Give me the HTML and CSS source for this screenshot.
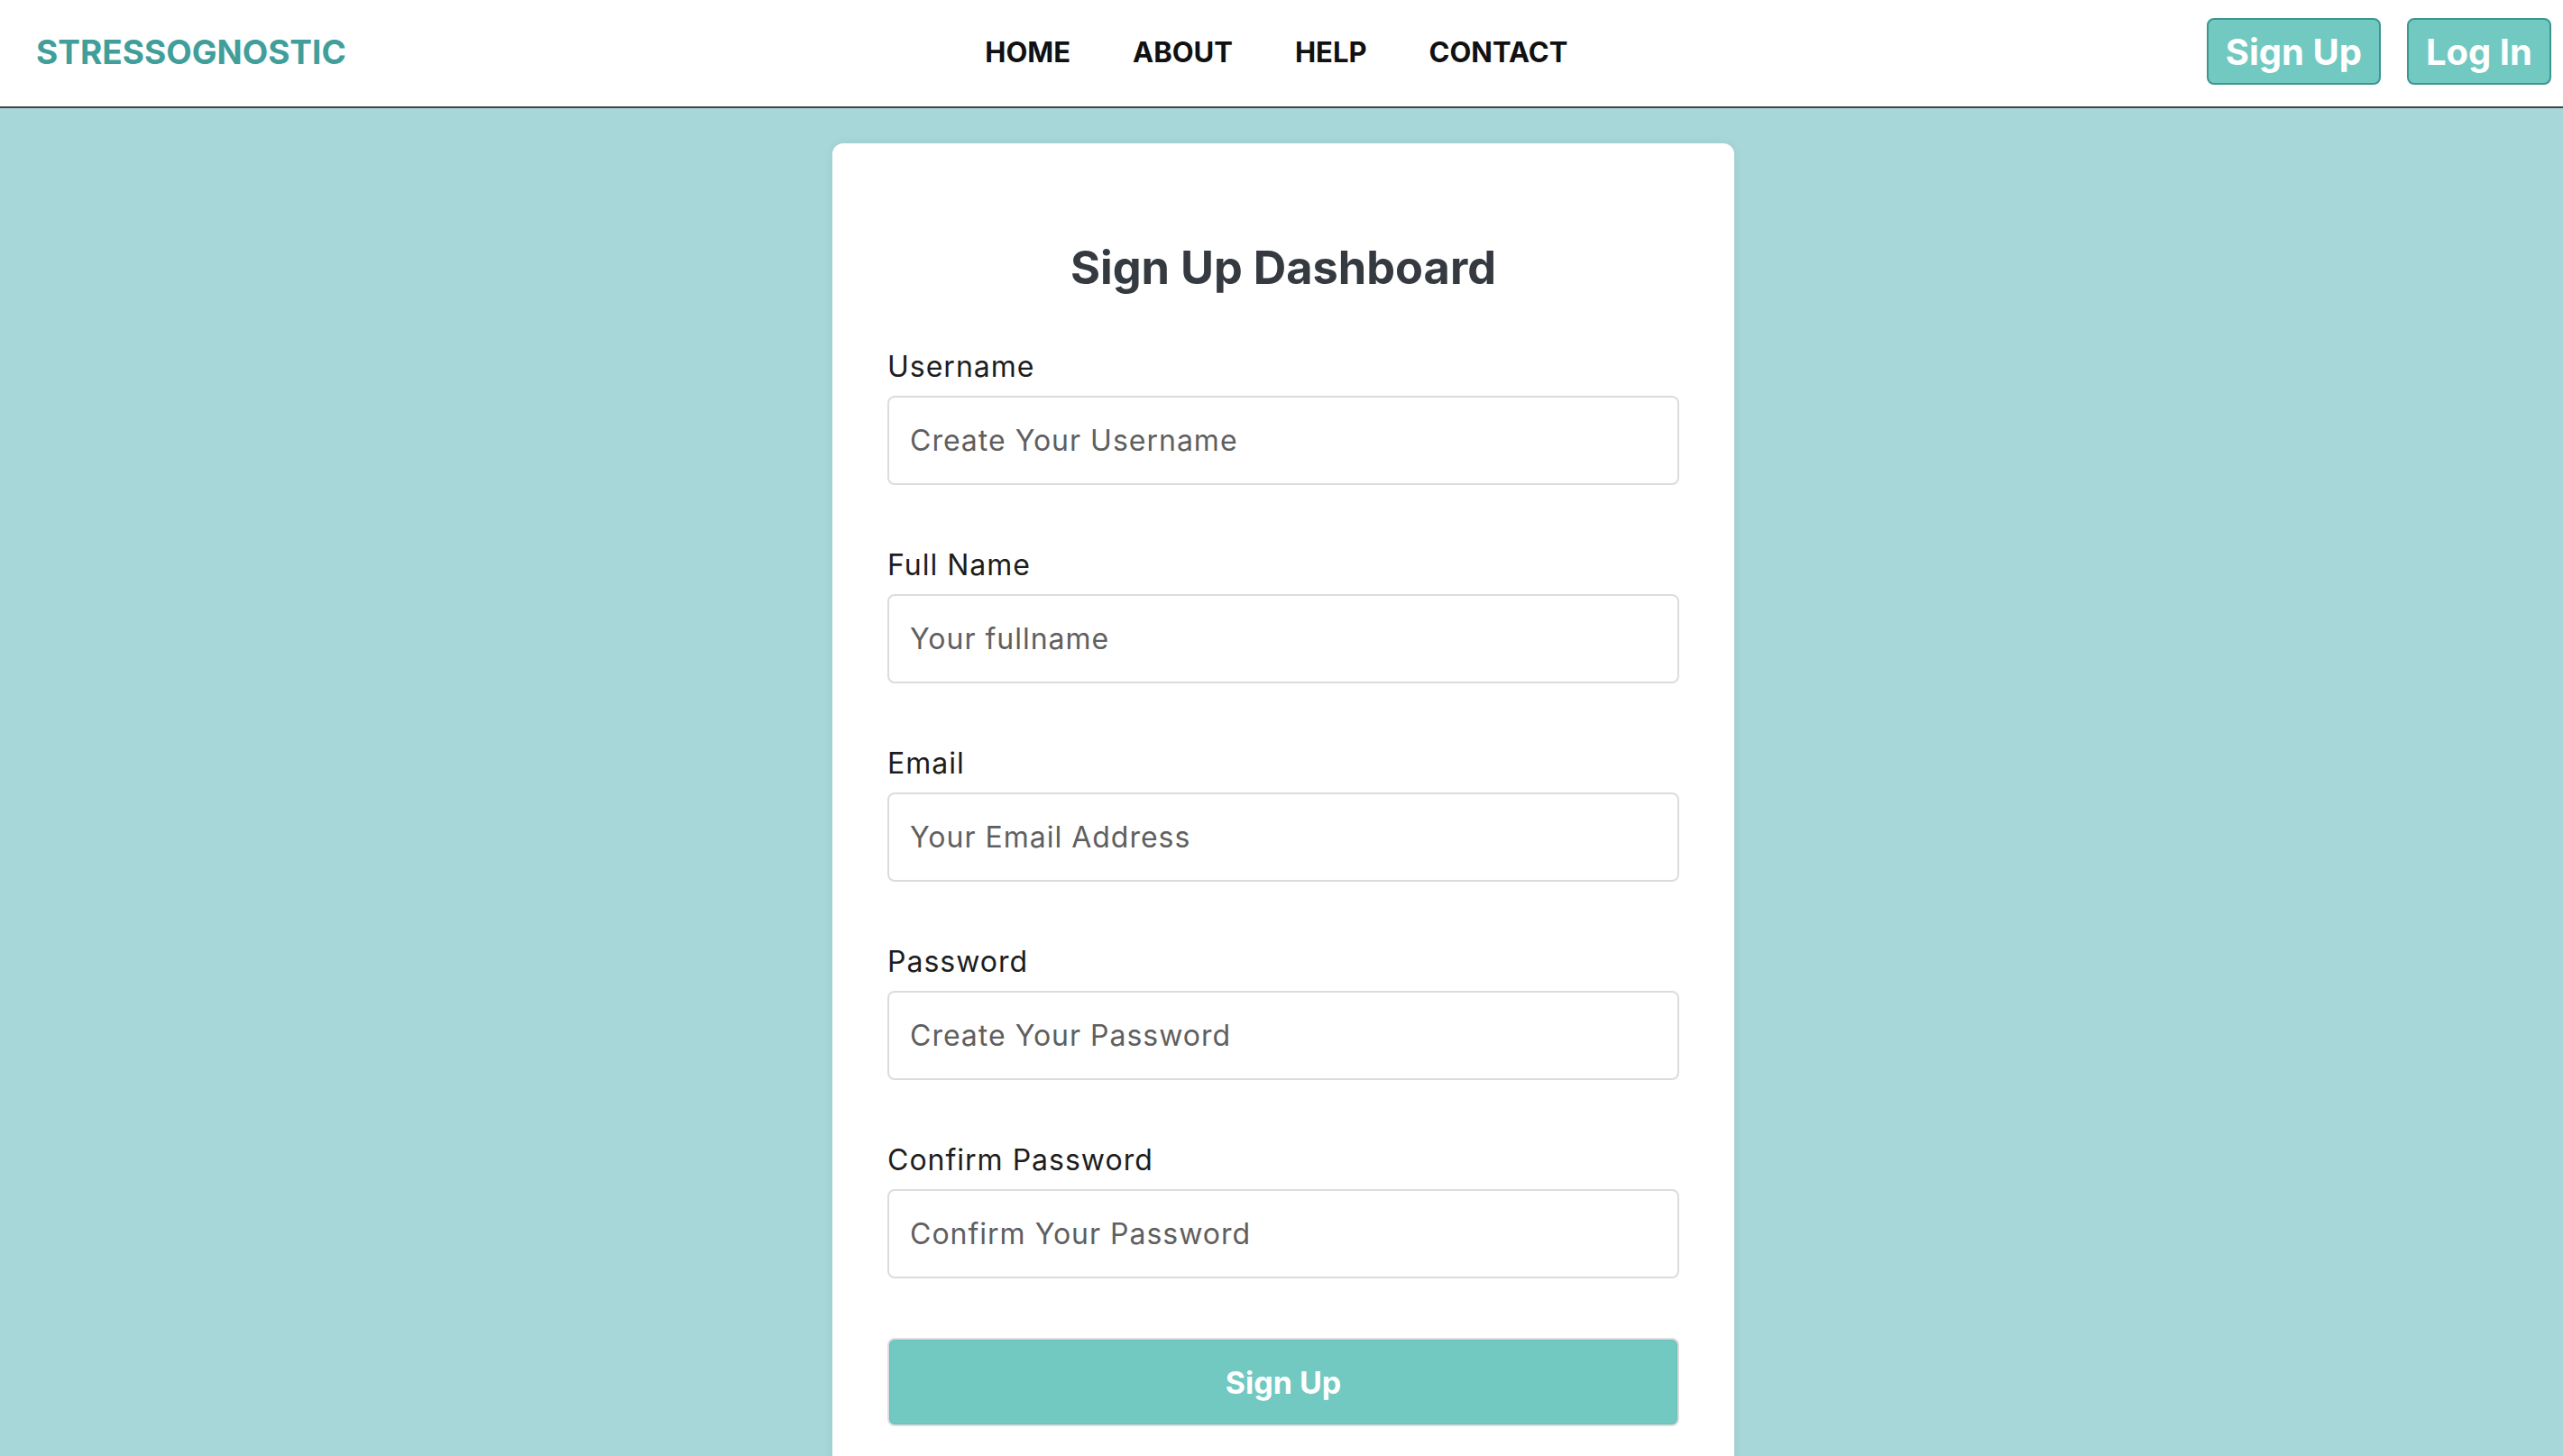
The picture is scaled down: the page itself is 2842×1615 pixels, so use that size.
FILE: index.html
```html
<!DOCTYPE html>
<html lang="en">
<head>
<meta charset="utf-8">
<title>Stressognostic - Sign Up</title>
<link rel="stylesheet" href="styles.css">
</head>
<body>
<header class="topbar">
  <a class="brand" href="#">STRESSOGNOSTIC</a>
  <nav class="menu">
    <a href="#">HOME</a>
    <a href="#">ABOUT</a>
    <a href="#">HELP</a>
    <a href="#">CONTACT</a>
  </nav>
  <div class="auth">
    <a class="auth-btn" href="#">Sign Up</a>
    <a class="auth-btn" href="#">Log In</a>
  </div>
</header>
<main class="page">
  <form class="card">
    <h1 class="title">Sign Up Dashboard</h1>
    <div class="field">
      <label class="label" for="u">Username</label>
      <input class="input" id="u" type="text" placeholder="Create Your Username">
    </div>
    <div class="field">
      <label class="label" for="f">Full Name</label>
      <input class="input" id="f" type="text" placeholder="Your fullname">
    </div>
    <div class="field">
      <label class="label" for="e">Email</label>
      <input class="input" id="e" type="email" placeholder="Your Email Address">
    </div>
    <div class="field">
      <label class="label" for="p">Password</label>
      <input class="input" id="p" type="password" placeholder="Create Your Password">
    </div>
    <div class="field">
      <label class="label" for="c">Confirm Password</label>
      <input class="input" id="c" type="password" placeholder="Confirm Your Password">
    </div>
    <button class="submit" type="button">Sign Up</button>
  </form>
</main>
</body>
</html>
```
FILE: styles.css
```css
* { box-sizing: border-box; }
html, body { margin: 0; padding: 0; }
body {
  background: #a8d7d9;
  font-family: Inter, "Open Sans", "Liberation Sans", sans-serif;
  color: #212529;
}
a { text-decoration: none; }

.topbar {
  height: 120px;
  background: #fff;
  border-bottom: 2px solid #444;
  display: flex;
  align-items: center;
  justify-content: space-between;
  padding: 0 13px 4px 40px;
}
.brand {
  font-size: 37px;
  font-weight: 700;
  color: #419e9a;
}
.menu {
  display: flex;
  gap: 69px;
}
.menu a {
  font-size: 31px;
  font-weight: 700;
  color: #111;
}
.auth {
  display: flex;
  gap: 29px;
}
.auth-btn {
  height: 74px;
  display: flex;
  align-items: center;
  padding: 0 19px;
  background: #72c9c1;
  border: 2px solid #3d978f;
  border-radius: 8px;
  color: #fff;
  font-size: 40px;
  font-weight: 700;
}

.page {
  display: flex;
  justify-content: center;
  padding-top: 39px;
}
.card {
  width: 1000px;
  margin-left: 4px;
  background: #fff;
  border-radius: 12px;
  box-shadow: 0 0 12px rgba(0, 0, 0, 0.06);
  padding: 107px 61px 60px;
}
.title {
  margin: 0 0 56px;
  text-align: center;
  font-size: 50.5px;
  line-height: 62px;
  font-weight: 700;
  color: #343a40;
}
.field {
  margin-bottom: 66px;
}
.field:last-of-type { margin-bottom: 66px; }
.label {
  display: block;
  font-size: 32px;
  line-height: 46px;
  letter-spacing: 1px;
  margin-bottom: 9px;
  color: #1d1d1d;
}
.input {
  display: block;
  width: 100%;
  height: 99px;
  border: 2px solid #dcdcdc;
  border-radius: 8px;
  padding: 0 23px;
  font-family: inherit;
  font-size: 32px;
  letter-spacing: 1px;
  color: #333;
  background: #fff;
}
.input::placeholder { color: #5f5f5f; }
.submit {
  display: block;
  width: 100%;
  height: 98px;
  background: #72c9c1;
  border: 2px solid #dedede;
  box-shadow: inset 0 0 0 1px #65bdb5;
  border-radius: 8px;
  color: #fff;
  font-family: inherit;
  font-size: 34px;
  font-weight: 700;
}
```
